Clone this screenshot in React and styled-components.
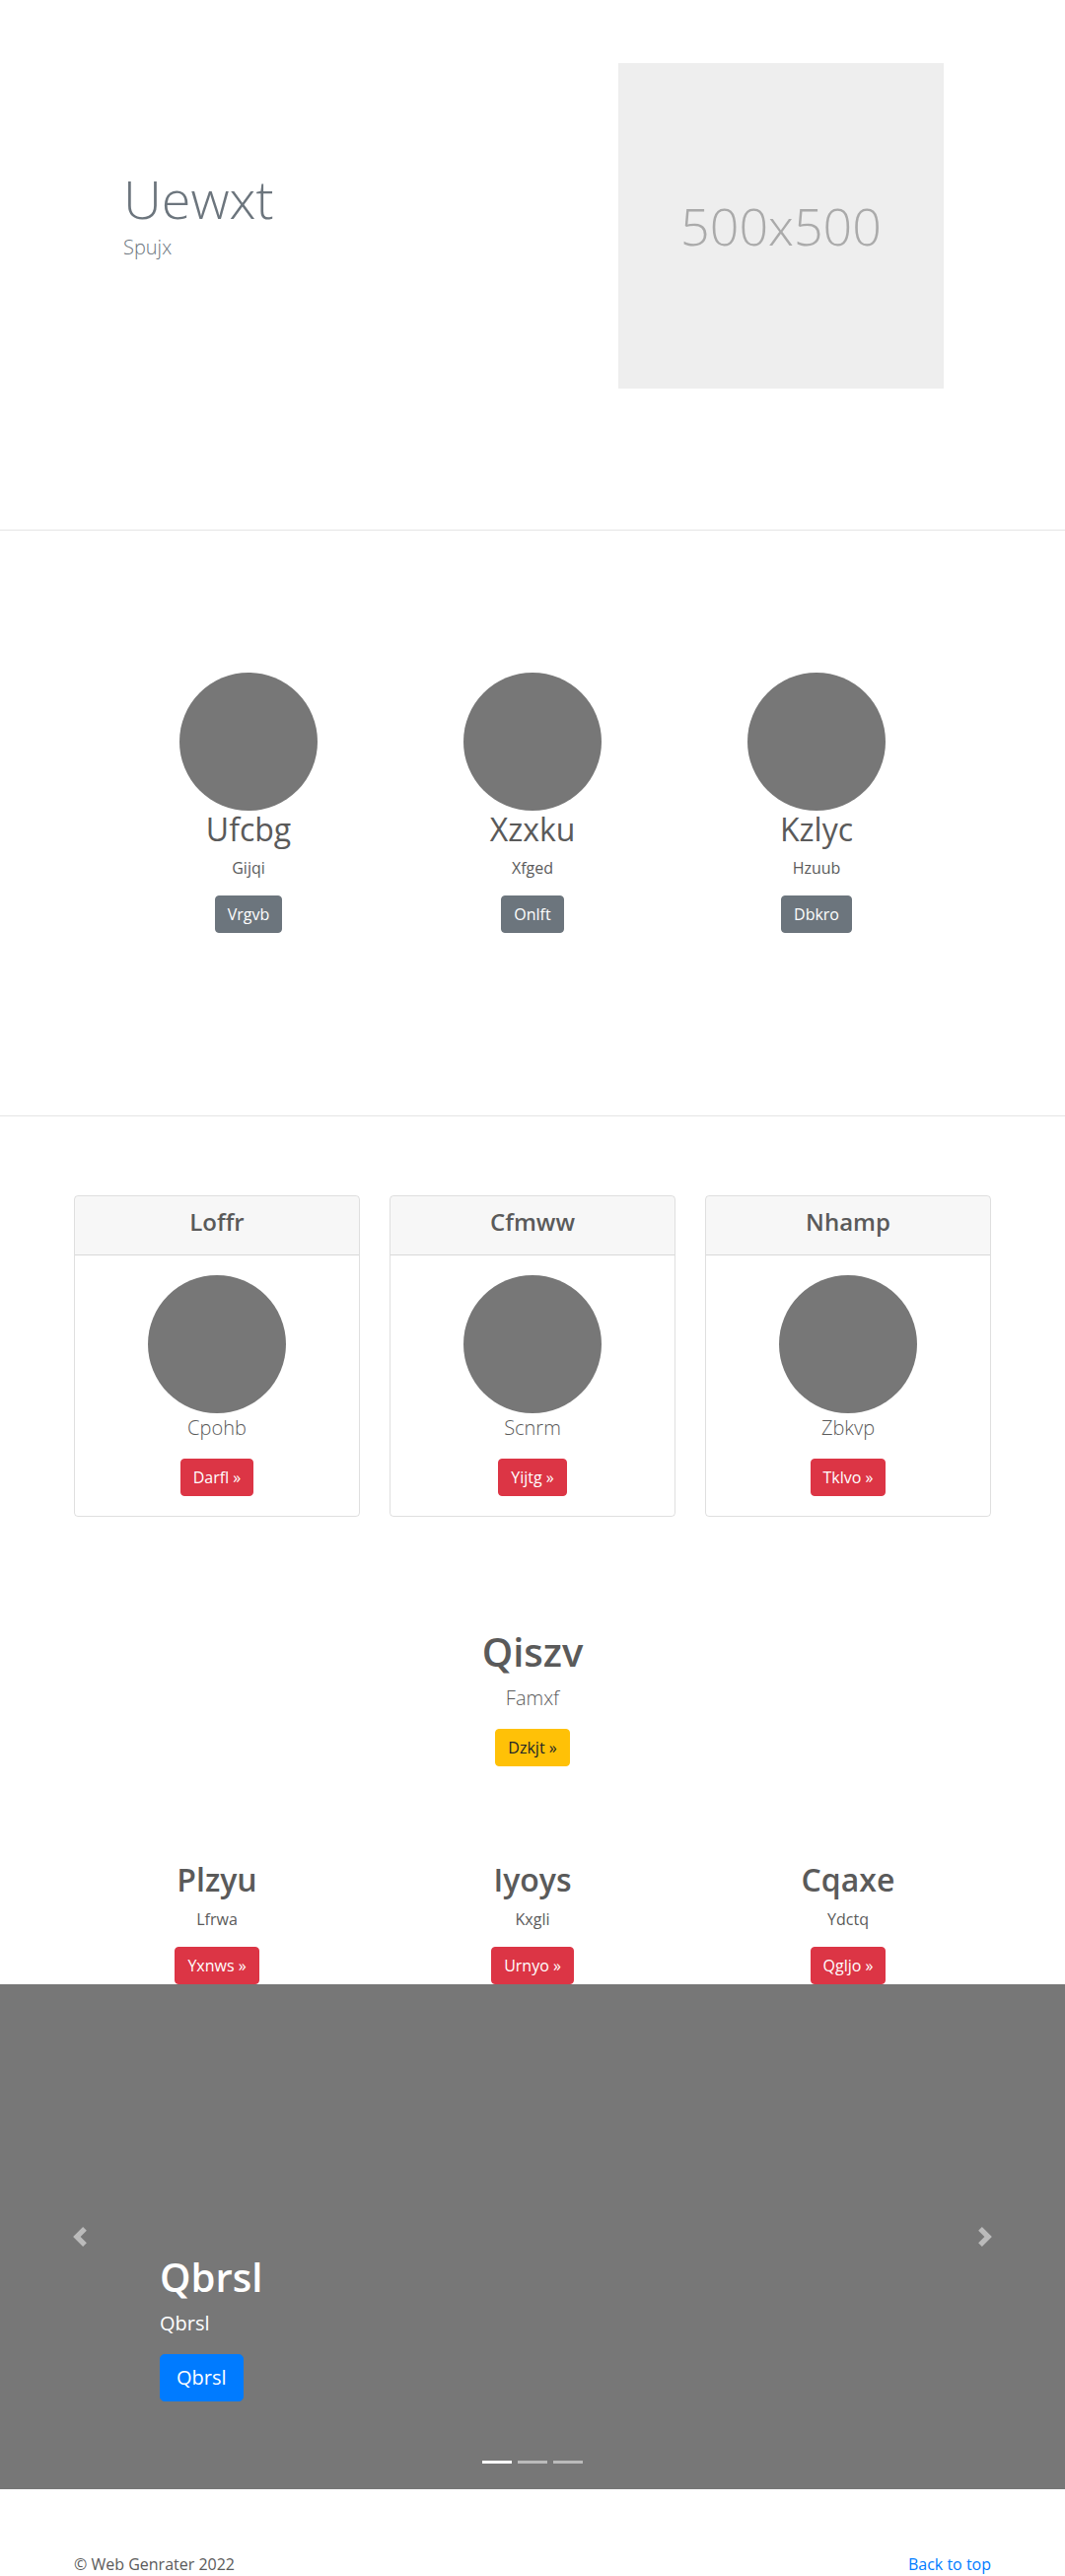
import React from 'react'
import styled, { createGlobalStyle } from 'styled-components'

const GlobalStyle = createGlobalStyle`
    * { box-sizing: border-box; }
    body {
        margin: 0;
        font-family: "Open Sans", "Segoe UI", "Liberation Sans", sans-serif;
        font-size: 16px;
        line-height: 1.5;
        color: #5a5a5a;
        background: #fff;
    }
`;

const features = [
    { title: 'Ufcbg', text: 'Gijqi', button: 'Vrgvb' },
    { title: 'Xzxku', text: 'Xfged', button: 'Onlft' },
    { title: 'Kzlyc', text: 'Hzuub', button: 'Dbkro' },
];

const cards = [
    { title: 'Loffr', text: 'Cpohb', button: 'Darfl' },
    { title: 'Cfmww', text: 'Scnrm', button: 'Yijtg' },
    { title: 'Nhamp', text: 'Zbkvp', button: 'Tklvo' },
];

const columns = [
    { title: 'Plzyu', text: 'Lfrwa', button: 'Yxnws' },
    { title: 'Iyoys', text: 'Kxgli', button: 'Urnyo' },
    { title: 'Cqaxe', text: 'Ydctq', button: 'Qgljo' },
];

function Chevron({ flip }) {
    return (
        <svg width="20" height="20" viewBox="0 0 8 8" style={flip ? { transform: 'scaleX(-1)' } : undefined}>
            <path fill="#fff" d="M5.25 0l-4 4 4 4 1.5-1.5L4.25 4l2.5-2.5L5.25 0z" />
        </svg>
    )
}

function App() {
    return (
        <>
            <GlobalStyle />

            <Hero>
                <HeroRow>
                    <HeroText>
                        <HeroTitle>Uewxt</HeroTitle>
                        <HeroLead>Spujx</HeroLead>
                    </HeroText>
                    <Placeholder>500x500</Placeholder>
                </HeroRow>
            </Hero>

            <Features>
                <FeatureRow>
                    {features.map((f) => (
                        <Feature key={f.title}>
                            <Circle />
                            <FeatureTitle>{f.title}</FeatureTitle>
                            <Text>{f.text}</Text>
                            <ButtonLine>
                                <Button variant="secondary">{f.button}</Button>
                            </ButtonLine>
                        </Feature>
                    ))}
                </FeatureRow>
            </Features>

            <CardGrid>
                {cards.map((c) => (
                    <Card key={c.title}>
                        <CardHeader>
                            <CardTitle>{c.title}</CardTitle>
                        </CardHeader>
                        <CardBody>
                            <Circle />
                            <Lead>{c.text}</Lead>
                            <Button variant="danger">{c.button} &raquo;</Button>
                        </CardBody>
                    </Card>
                ))}
            </CardGrid>

            <Callout>
                <CalloutTitle>Qiszv</CalloutTitle>
                <Lead>Famxf</Lead>
                <Button variant="warning">Dzkjt &raquo;</Button>
            </Callout>

            <ColumnRow>
                {columns.map((c) => (
                    <Column key={c.title}>
                        <ColumnTitle>{c.title}</ColumnTitle>
                        <ColumnText>{c.text}</ColumnText>
                        <Button variant="danger">{c.button} &raquo;</Button>
                    </Column>
                ))}
            </ColumnRow>

            <Carousel>
                <Control side="left"><Chevron /></Control>
                <Control side="right"><Chevron flip /></Control>
                <Caption>
                    <CaptionTitle>Qbrsl</CaptionTitle>
                    <CaptionText>Qbrsl</CaptionText>
                    <ButtonLine>
                        <Button variant="primary" size="lg">Qbrsl</Button>
                    </ButtonLine>
                </Caption>
                <Indicators>
                    <Indicator active />
                    <Indicator />
                    <Indicator />
                </Indicators>
            </Carousel>

            <Footer>
                <FooterText>&copy; Web Genrater 2022</FooterText>
                <TopLink href="#">Back to top</TopLink>
            </Footer>
        </>
    )
}

export default App

const buttonColors = {
    primary: { bg: '#007bff', fg: '#fff' },
    secondary: { bg: '#6c757d', fg: '#fff' },
    danger: { bg: '#dc3545', fg: '#fff' },
    warning: { bg: '#ffc107', fg: '#212529' },
};

const Button = styled.a`
    display: inline-block;
    font-weight: 400;
    text-decoration: none;
    cursor: pointer;
    line-height: 1.5;
    font-size: ${(p) => (p.size === 'lg' ? '20px' : '16px')};
    padding: ${(p) => (p.size === 'lg' ? '8px 16px' : '6px 12px')};
    border-radius: ${(p) => (p.size === 'lg' ? '4.8px' : '4px')};
    background-color: ${(p) => buttonColors[p.variant].bg};
    border: 1px solid ${(p) => buttonColors[p.variant].bg};
    color: ${(p) => buttonColors[p.variant].fg};
`;

const Hero = styled.section`
    padding: 64px 0 143px;
    border-bottom: 1px solid #e5e5e5;
`;

const HeroRow = styled.div`
    width: 960px;
    margin: 0 auto;
    display: flex;
    align-items: flex-start;
`;

const HeroText = styled.div`
    flex: 1;
    padding: 105px 0 0 65px;
`;

const HeroTitle = styled.h1`
    margin: 0;
    font-size: 54px;
    font-weight: 300;
    line-height: 1.2;
    color: #6c757d;
`;

const HeroLead = styled.p`
    margin: 2px 0 0;
    font-size: 20px;
    font-weight: 300;
    color: #6c757d;
`;

const Placeholder = styled.div`
    width: 330px;
    height: 330px;
    margin-right: 63px;
    background: #eee;
    color: #aaa;
    font-size: 52px;
    font-weight: 300;
    display: flex;
    align-items: center;
    justify-content: center;
`;

const Features = styled.section`
    padding: 144px 0 169px;
    border-bottom: 1px solid #e5e5e5;
`;

const FeatureRow = styled.div`
    width: 864px;
    margin: 0 auto;
    display: grid;
    grid-template-columns: repeat(3, 1fr);
`;

const Feature = styled.div`
    text-align: center;
`;

const Circle = styled.div`
    width: 140px;
    height: 140px;
    border-radius: 50%;
    background: #777;
    margin: 0 auto;
`;

const FeatureTitle = styled.h2`
    margin: 0 0 8px;
    font-size: 32px;
    font-weight: 400;
    line-height: 1.2;
`;

const Text = styled.p`
    margin: 0 0 16px;
`;

const ButtonLine = styled.p`
    margin: 0 0 16px;
`;

const CardGrid = styled.div`
    width: 930px;
    margin: 80px auto 0;
    display: grid;
    grid-template-columns: repeat(3, 1fr);
    gap: 30px;
`;

const Card = styled.div`
    border: 1px solid rgba(0, 0, 0, 0.125);
    border-radius: 4px;
    overflow: hidden;
`;

const CardHeader = styled.div`
    padding: 12px 20px;
    background: rgba(0, 0, 0, 0.03);
    border-bottom: 1px solid rgba(0, 0, 0, 0.125);
    text-align: center;
`;

const CardTitle = styled.h4`
    margin: 0 0 6px;
    font-size: 24px;
    font-weight: 600;
    line-height: 1.2;
`;

const CardBody = styled.div`
    padding: 20px;
    text-align: center;
`;

const Lead = styled.p`
    margin: 0 0 16px;
    font-size: 20px;
    font-weight: 300;
`;

const Callout = styled.section`
    margin-top: 113px;
    text-align: center;
`;

const CalloutTitle = styled.h1`
    margin: 0 0 8px;
    font-size: 40px;
    font-weight: 600;
    line-height: 1.2;
`;

const ColumnRow = styled.div`
    width: 960px;
    margin: 96px auto 0;
    display: grid;
    grid-template-columns: repeat(3, 1fr);
`;

const Column = styled.div`
    text-align: center;
`;

const ColumnTitle = styled.h2`
    margin: 0 0 8px;
    font-size: 32px;
    font-weight: 600;
    line-height: 1.2;
`;

const ColumnText = styled.p`
    margin: 0 12px 16px;
`;

const Carousel = styled.div`
    position: relative;
    height: 512px;
    background: #777;
    margin-bottom: 64px;
`;

const Control = styled.a`
    position: absolute;
    top: 0;
    bottom: 0;
    ${(p) => p.side}: 0;
    width: 15%;
    display: flex;
    align-items: center;
    justify-content: center;
    opacity: 0.5;
`;

const Caption = styled.div`
    position: absolute;
    left: 15%;
    right: 15%;
    bottom: 53px;
    padding: 20px 0;
    color: #fff;
    text-align: left;
`;

const CaptionTitle = styled.h1`
    margin: 0 0 8px;
    font-size: 40px;
    font-weight: 600;
    line-height: 1.2;
`;

const CaptionText = styled.p`
    margin: 0 0 16px;
    font-size: 20px;
`;

const Indicators = styled.ol`
    position: absolute;
    left: 15%;
    right: 15%;
    bottom: 0;
    margin: 0 0 16px;
    padding: 0;
    list-style: none;
    display: flex;
    justify-content: center;
`;

const Indicator = styled.li`
    width: 30px;
    height: 3px;
    margin: 10px 3px;
    background: #fff;
    opacity: ${(p) => (p.active ? 1 : 0.5)};
`;

const Footer = styled.footer`
    width: 930px;
    margin: 0 auto;
    display: flex;
    justify-content: space-between;
`;

const FooterText = styled.p`
    margin: 0 0 16px;
`;

const TopLink = styled.a`
    color: #007bff;
    text-decoration: none;
`;
